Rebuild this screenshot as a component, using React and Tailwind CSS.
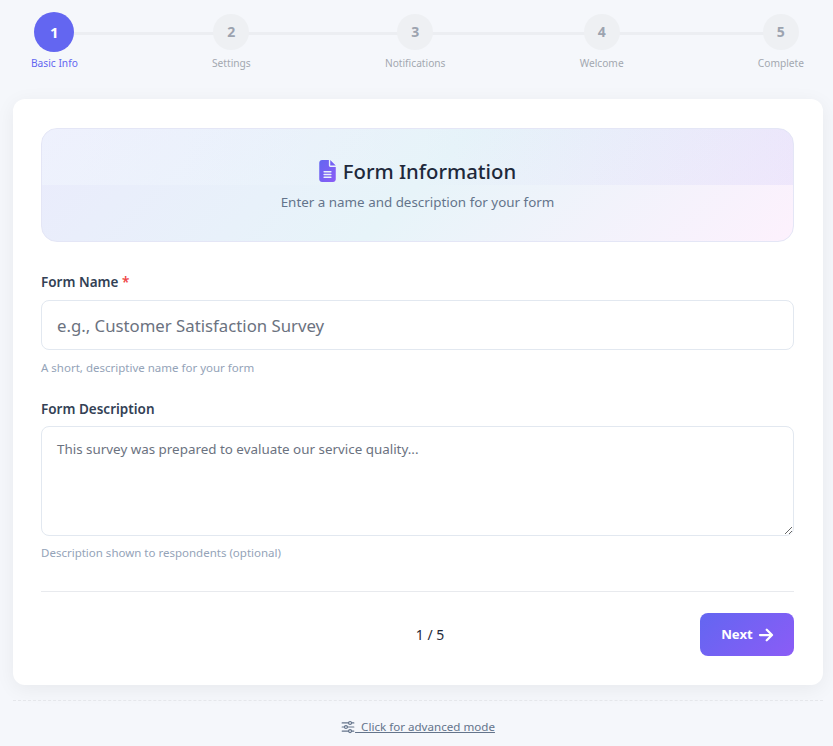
import React from "react";

const steps = [
  ["1", "Basic Info"],
  ["2", "Settings"],
  ["3", "Notifications"],
  ["4", "Welcome"],
  ["5", "Complete"],
];

function Step({ n, label, active }) {
  return (
    <div className="relative z-10 flex flex-col items-center">
      <div className="flex h-10 items-center justify-center">
        <div
          className={
            active
              ? "flex h-10 w-10 items-center justify-center rounded-full bg-[#6366f1] text-[15px] font-bold text-white"
              : "flex h-9 w-9 items-center justify-center rounded-full bg-[#eef0f3] text-sm font-bold text-[#9ca3af]"
          }
        >
          {n}
        </div>
      </div>
      <span className={active ? "mt-[3px] text-[10.2px] leading-[16px] text-[#6366f1]" : "mt-[3px] text-[10.2px] leading-[16px] text-[#a3a8b0]"}>
        {label}
      </span>
    </div>
  );
}

export default function App() {
  return (
    <div
      className="min-h-[746px] overflow-hidden bg-[#f5f7fb] pl-[13px] pr-[10px]"
      style={{ fontFamily: '"Noto Sans", "Open Sans", sans-serif' }}
    >
      <div className="relative mb-[28px] flex justify-between pl-[18px] pr-[19px] pt-3">
        <div className="absolute left-[41px] right-[42px] top-[32px] h-[3px] bg-[#eceef2]" />
        {steps.map(([n, l], i) => (
          <Step key={n} n={n} label={l} active={i === 0} />
        ))}
      </div>

      <div className="rounded-xl bg-white pb-[29px] pl-7 pr-[29px] pt-[29px] shadow-[0_4px_20px_rgba(0,0,0,0.06)]">
        <div className="relative flex h-[114px] flex-col items-center overflow-hidden rounded-2xl border border-[#e4e6f6] bg-linear-135/srgb from-[#eaebfc] via-[#e7f4f9] to-[#fdf1fd] pt-[26px]">
          <div className="absolute inset-x-0 top-0 h-[56px] bg-linear-to-r/srgb from-[#f6fcff57] via-[#ffffff00] to-[#6366f114]" />
          <div className="relative flex items-center gap-[7px]">
            <svg width="17" height="22" viewBox="0 0 384 512">
              <defs>
                <linearGradient id="docFill" x1="0" y1="0" x2="1" y2="1">
                  <stop offset="0" stopColor="#6366f1" />
                  <stop offset="1" stopColor="#8b5cf6" />
                </linearGradient>
              </defs>
              <path fill="url(#docFill)" d="M64 0C28.7 0 0 28.7 0 64V448c0 35.3 28.7 64 64 64H320c35.3 0 64-28.7 64-64V160H256c-17.7 0-32-14.3-32-32V0H64zM256 0V128H384L256 0zM112 256H272c8.8 0 16 7.2 16 16s-7.2 16-16 16H112c-8.8 0-16-7.2-16-16s7.2-16 16-16zm0 64H272c8.8 0 16 7.2 16 16s-7.2 16-16 16H112c-8.8 0-16-7.2-16-16s7.2-16 16-16zm0 64H272c8.8 0 16 7.2 16 16s-7.2 16-16 16H112c-8.8 0-16-7.2-16-16s7.2-16 16-16z" />
            </svg>
            <h2 className="text-[20.3px] font-medium leading-[32px] text-[#1e293b]">Form Information</h2>
          </div>
          <p className="relative mt-[5px] text-[13.4px] leading-[20px] text-[#64748b]">Enter a name and description for your form</p>
        </div>

        <div className="mt-[30px]">
          <label className="block text-[13.5px] font-semibold leading-5 text-[#334155]">
            Form Name <span className="text-[#ef4444]">*</span>
          </label>
          <input
            className="mt-2 block h-[50px] w-full rounded-lg border border-[#e2e8f0] bg-white px-[15px] text-[16.75px] outline-none placeholder:text-[#6b7280]"
            placeholder="e.g., Customer Satisfaction Survey"
          />
          <p className="mt-2 text-[11.5px] leading-[20px] text-[#94a3b8]">A short, descriptive name for your form</p>
        </div>

        <div className="mt-[21px]">
          <label className="block text-[13.5px] font-semibold leading-5 text-[#334155]">Form Description</label>
          <textarea
            className="mt-[7px] block h-[110px] w-full rounded-lg border border-[#e2e8f0] bg-white px-[15px] pb-[10px] pt-[12px] text-[13.4px] leading-[20px] outline-none placeholder:text-[#6b7280]"
            placeholder="This survey was prepared to evaluate our service quality..."
          />
          <p className="mt-[7px] text-[11.5px] leading-[20px] text-[#94a3b8]">Description shown to respondents (optional)</p>
        </div>

        <div className="mt-[28px] flex items-center justify-between border-t border-[#e8eaee] pt-[21px]">
          <div className="w-[119px]" />
          <span className="text-[14px] text-[#1f2937]">1 / 5</span>
          <button className="flex h-[43px] w-[94px] items-center justify-center gap-[4px] rounded-lg bg-linear-135/srgb from-[#6366f1] to-[#8b5cf6] pl-[2px] text-[13.2px] font-bold text-white">
            Next
            <svg width="18" height="18" viewBox="0 0 24 24" fill="none" stroke="currentColor" strokeWidth="3" strokeLinecap="round" strokeLinejoin="round">
              <path d="M4 12h16M13 5l7 7-7 7" />
            </svg>
          </button>
        </div>
      </div>

      <div className="mt-[15px] flex justify-center border-t border-dashed border-[#e5e7eb] pt-[17px]">
        <a href="#" className="flex items-center text-[11.6px] leading-[18px] text-[#64748b] underline">
          <svg width="14" height="14" viewBox="0 0 24 24" fill="none" stroke="currentColor" strokeWidth="2" strokeLinecap="round">
            <path d="M2 5h11M18 5h4M2 12h4M11 12h11M2 19h11M18 19h4" />
            <circle cx="15.5" cy="5" r="2.5" />
            <circle cx="8.5" cy="12" r="2.5" />
            <circle cx="15.5" cy="19" r="2.5" />
          </svg>
          <span>&nbsp;&nbsp;Click for advanced mode</span>
        </a>
      </div>
    </div>
  );
}
